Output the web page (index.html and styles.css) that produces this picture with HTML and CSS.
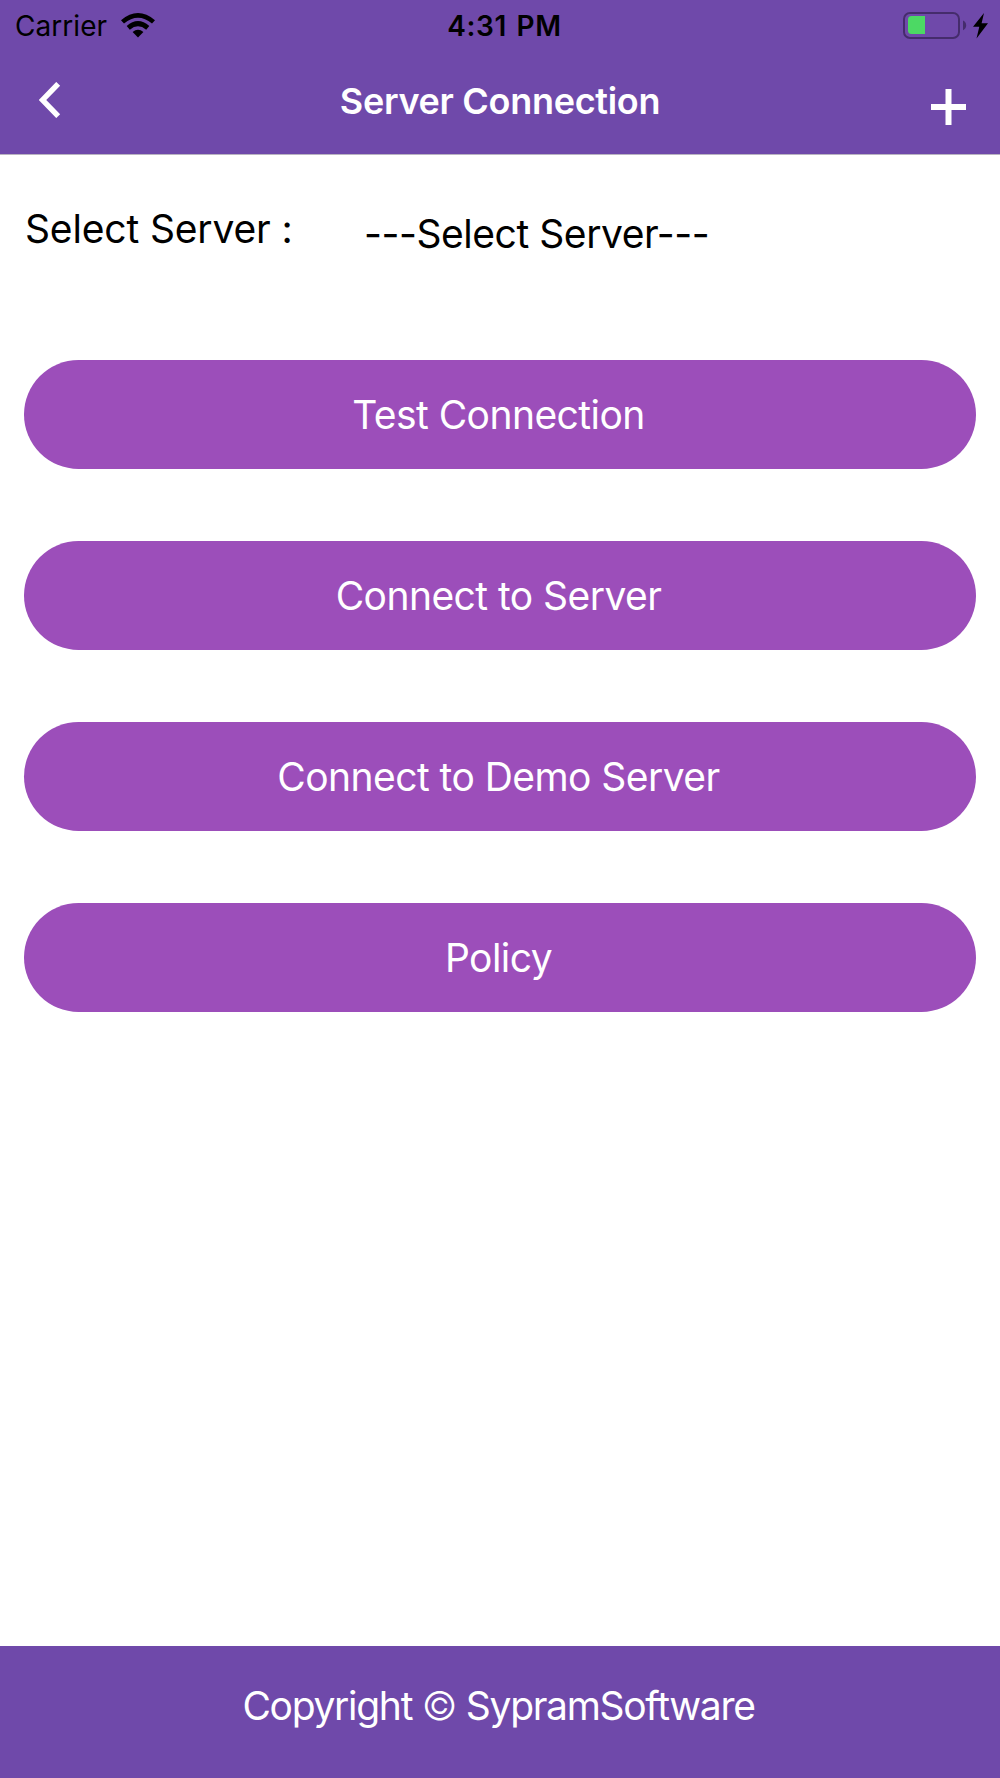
FILE: index.html
```html
<!DOCTYPE html>
<html lang="en">

<head>
  <meta charset="UTF-8" />
  <meta name="viewport" content="width=device-width, initial-scale=1.0" />
  <title>Server Connection</title>
  <link rel="stylesheet" href="styles.css">
</head>

<body>
  <header class="header">
    <div class="status-bar">
      <div class="carrier">
        <span class="carrier-name">Carrier</span>
        <svg class="wifi" width="34" height="25" viewBox="0 0 34 25">
          <path d="M0 7.2Q17 -7.2 34 7.2L31 10.5Q17 -1.2 3 10.5Z" />
          <path d="M5.7 13Q17 3 28.3 13L25.2 16.7Q17 9.9 8.8 16.7Z" />
          <path d="M11.6 19.1Q17 14.4 22.4 19.1L17 24.4Z" />
        </svg>
      </div>
      <span class="time">4:31 PM</span>
      <div class="power">
        <svg width="86" height="28" viewBox="0 0 86 28">
          <rect x="1" y="1" width="55" height="25" rx="6" fill="none" stroke="#452c6c" stroke-width="2" />
          <path d="M60 8.5Q63.2 10 63.2 13.3T60 18.3Z" fill="#452c6c" />
          <path d="M22 4V22H8.5Q5 22 5 18.5V7.5Q5 4 8.5 4Z" fill="#4cd964" />
          <path d="M81 1L70 14.8H76.3L73.5 26.5L85 11.3H78.6Z" fill="#000" />
        </svg>
      </div>
    </div>
    <nav class="nav-bar">
      <button class="icon-btn back" aria-label="Back">
        <svg width="22" height="36" viewBox="0 0 22 36">
          <path d="M19.2 1.8L3.6 18L19.2 34.2" fill="none" stroke="#fff" stroke-width="5.4" />
        </svg>
      </button>
      <h1 class="title">Server Connection</h1>
      <button class="icon-btn add" aria-label="Add">
        <svg width="35" height="36" viewBox="0 0 35 36">
          <path d="M17.5 0V36M0 18H35" fill="none" stroke="#fff" stroke-width="6" />
        </svg>
      </button>
    </nav>
  </header>

  <main class="content">
    <div class="server-row">
      <span class="server-label">Select Server :</span>
      <span class="server-select">---Select Server---</span>
    </div>
    <div class="actions">
      <button class="btn">Test Connection</button>
      <button class="btn">Connect to Server</button>
      <button class="btn">Connect to Demo Server</button>
      <button class="btn">Policy</button>
    </div>
  </main>

  <footer class="footer">Copyright <span class="symbol">©</span> SypramSoftware</footer>
</body>

</html>
```

FILE: styles.css
```css
* {
  box-sizing: border-box;
}

body {
  margin: 0;
  height: 1778px;
  display: flex;
  flex-direction: column;
  font-family: Inter, "Liberation Sans", sans-serif;
  background: #fff;
  color: #000;
}

.header {
  height: 155px;
  background: #6f49aa;
  border-bottom: 1px solid #b9b3c1;
}

.status-bar {
  display: grid;
  grid-template-columns: 1fr auto 1fr;
  align-items: center;
  height: 50px;
  padding: 1px 11px 0 15px;
  font-size: 28px;
}

.carrier {
  display: flex;
  align-items: center;
  gap: 14px;
}

.carrier-name {
  letter-spacing: 0.05px;
}

.wifi {
  margin-bottom: 1px;
}

.time {
  padding-left: 5px;
  font-weight: 600;
  letter-spacing: 0.6px;
  word-spacing: 2px;
}

.power {
  display: flex;
  justify-content: flex-end;
}

.nav-bar {
  display: flex;
  align-items: center;
  justify-content: space-between;
  height: 101px;
  padding: 0 34px 0 39px;
}

.icon-btn {
  display: flex;
  width: 35px;
  padding: 0;
  border: none;
  background: none;
}

.back {
  padding-bottom: 2px;
}

.add {
  padding-top: 12px;
}

.title {
  margin: 0 5px 0 0;
  font-size: 36px;
  font-weight: 600;
  letter-spacing: -0.3px;
  color: #fff;
}

.content {
  flex: 1;
  padding: 49px 24px 0;
}

.server-row {
  display: flex;
  height: 156px;
  font-size: 39px;
  line-height: 49px;
}

.server-label {
  width: 340px;
  padding-left: 1px;
  letter-spacing: -0.15px;
}

.server-select {
  padding-top: 5px;
  letter-spacing: -0.45px;
}

.actions {
  display: flex;
  flex-direction: column;
  gap: 72.5px;
}

.btn {
  height: 108.5px;
  padding: 0 3px 0 0;
  border: none;
  border-radius: 55px;
  background: #9c4eba;
  color: #fff;
  font-family: inherit;
  font-size: 39px;
  letter-spacing: -0.55px;
}

.footer {
  height: 132px;
  padding-right: 3px;
  background: #6f49aa;
  color: #fff;
  font-size: 39px;
  line-height: 120px;
  letter-spacing: -1.3px;
  text-align: center;
}

.symbol {
  font-weight: 300;
}
```
